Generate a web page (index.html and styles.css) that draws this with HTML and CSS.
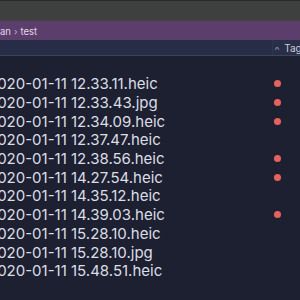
FILE: index.html
```html
<!DOCTYPE html>
<html>
<head>
<meta charset="utf-8">
<link rel="stylesheet" href="styles.css">
</head>
<body>
<div class="app">
  <div class="topline"></div>
  <div class="toolbar"></div>
  <div class="crumbs"><span class="crumb">an</span><span class="sep">›</span><span class="crumb">test</span></div>
  <div class="colhead">
    <div class="spacer"></div>
    <div class="tagcol"><span class="chev">^</span><span class="tagslabel">Tags</span></div>
  </div>
  <div class="list">
    <div class="row"><span class="name">2020-01-11 12.33.11.heic</span><span class="dot"></span></div>
    <div class="row"><span class="name">2020-01-11 12.33.43.jpg</span><span class="dot"></span></div>
    <div class="row"><span class="name">2020-01-11 12.34.09.heic</span><span class="dot"></span></div>
    <div class="row"><span class="name">2020-01-11 12.37.47.heic</span></div>
    <div class="row"><span class="name">2020-01-11 12.38.56.heic</span><span class="dot"></span></div>
    <div class="row"><span class="name">2020-01-11 14.27.54.heic</span><span class="dot"></span></div>
    <div class="row"><span class="name">2020-01-11 14.35.12.heic</span></div>
    <div class="row"><span class="name">2020-01-11 14.39.03.heic</span><span class="dot"></span></div>
    <div class="row"><span class="name">2020-01-11 15.28.10.heic</span></div>
    <div class="row"><span class="name">2020-01-11 15.28.10.jpg</span></div>
    <div class="row"><span class="name">2020-01-11 15.48.51.heic</span></div>
  </div>
</div>
</body>
</html>
```
FILE: styles.css
```css
html, body {
  margin: 0;
  padding: 0;
  background: #1d2030;
  overflow: hidden;
}
.app {
  width: 300px;
  height: 300px;
  display: flex;
  flex-direction: column;
  background: #1d2030;
  font-family: Inter, "Noto Sans", sans-serif;
}
.topline {
  height: 1px;
  background: #2a2b2f;
}
.toolbar {
  height: 19px;
  background: #3e4040;
  border-bottom: 1px solid #4a4147;
}
.crumbs {
  height: 19px;
  background: #5c3e6d;
  display: flex;
  align-items: center;
  gap: 3px;
  padding-left: 0;
  padding-top: 1px;
  box-sizing: border-box;
  font-size: 9.5px;
  color: #e0d6e6;
}
.sep {
  color: #c4b6cc;
  font-size: 9px;
}
.colhead {
  height: 15px;
  background: #282d47;
  border-bottom: 1px solid #3c4260;
  display: flex;
}
.spacer {
  flex: 1;
}
.tagcol {
  width: 25px;
  display: flex;
  align-items: center;
  gap: 5px;
  padding-left: 2px;
  border-left: 1px solid #2f3450;
  background: #2a2f49;
  font-size: 10px;
  color: #c9ccd8;
  overflow: hidden;
}
.chev {
  font-size: 9px;
  color: #8e93aa;
  transform: scaleX(1.3);
  margin-top: 3px;
}
.tagslabel {
  white-space: nowrap;
}
.list {
  padding-top: 18px;
  display: flex;
  flex-direction: column;
}
.row {
  height: 18.7px;
  display: flex;
  align-items: center;
  position: relative;
}
.name {
  margin-left: -12px;
  padding-top: 1px;
  font-size: 15px;
  color: #dcdee5;
  white-space: nowrap;
  letter-spacing: 0;
}
.dot {
  position: absolute;
  left: 274px;
  top: 50%;
  width: 7px;
  height: 7px;
  margin-top: -3px;
  border-radius: 50%;
  background: #e6625f;
}
```
